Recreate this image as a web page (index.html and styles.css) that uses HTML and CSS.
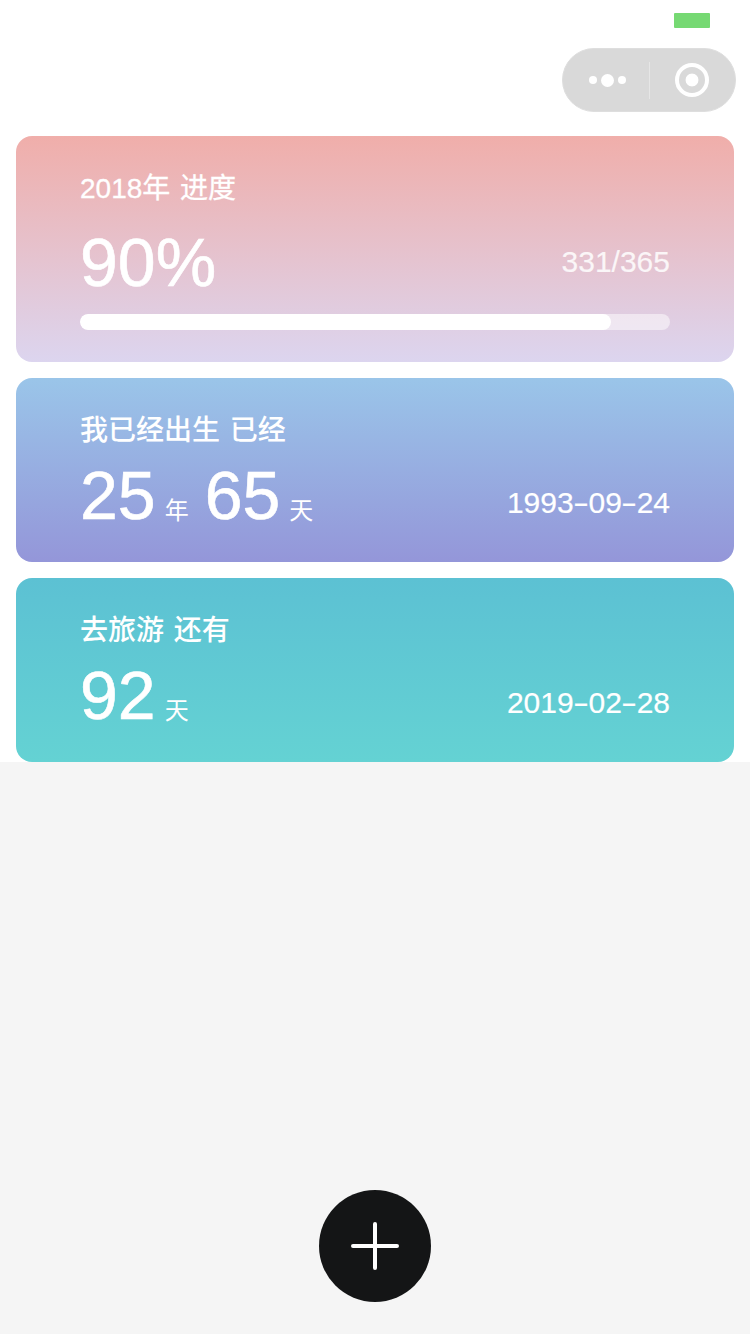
FILE: index.html
```html
<!DOCTYPE html>
<html lang="zh-CN">
<head>
    <meta charset="UTF-8">
    <meta name="viewport" content="width=device-width, initial-scale=1.0">
    <title>进度</title>
    <link rel="stylesheet" href="styles.css">
</head>
<body>
    <div class="top-area">
        <!-- Barre de statut -->
        <div class="status-bar">
            <div class="battery"></div>
        </div>

        <!-- Capsule -->
        <div class="nav-bar">
            <div class="capsule">
                <div class="capsule-dots">
                    <span class="dot"></span>
                    <span class="dot dot-big"></span>
                    <span class="dot"></span>
                </div>
                <div class="capsule-line"></div>
                <div class="capsule-close"></div>
            </div>
        </div>

        <!-- Cartes -->
        <div class="card-list">
            <div class="card card-pink">
                <p class="card-title">2018年 进度</p>
                <div class="card-row row-year">
                    <span class="big-num">90%</span>
                    <span class="card-side side-year">331/365</span>
                </div>
                <div class="progress">
                    <div class="progress-bar" style="width: 90%"></div>
                </div>
            </div>

            <div class="card card-blue">
                <p class="card-title">我已经出生 已经</p>
                <div class="card-row">
                    <div class="count">
                        <span class="big-num">25</span><span class="unit">年</span>
                        <span class="big-num num-next">65</span><span class="unit">天</span>
                    </div>
                    <span class="card-side">1993<span class="dash">-</span>09<span class="dash">-</span>24</span>
                </div>
            </div>

            <div class="card card-teal">
                <p class="card-title">去旅游 还有</p>
                <div class="card-row">
                    <div class="count">
                        <span class="big-num">92</span><span class="unit">天</span>
                    </div>
                    <span class="card-side">2019<span class="dash">-</span>02<span class="dash">-</span>28</span>
                </div>
            </div>
        </div>
    </div>

    <!-- Bouton ajouter -->
    <div class="bottom-area">
        <button class="add-btn" aria-label="添加">
            <svg width="48" height="48" viewBox="0 0 48 48">
                <path d="M24 2V46M2 24H46" stroke="#fff" stroke-width="4" stroke-linecap="round" fill="none"/>
            </svg>
        </button>
    </div>
</body>
</html>
```

FILE: styles.css
```css
/* General */
html, body {
    height: 100%;
}

body {
    margin: 0;
    display: flex;
    flex-direction: column;
    background-color: #f5f5f5;
    color: #fff;
    font-family: "Liberation Sans", "Noto Sans CJK SC", sans-serif;
}

.top-area {
    background-color: #fff;
}

/* Status bar */
.status-bar {
    height: 48px;
    box-sizing: border-box;
    padding: 13px 40px 0 0;
    display: flex;
    justify-content: flex-end;
}

.battery {
    width: 36px;
    height: 15px;
    background-color: #76d973;
    border-radius: 1px;
}

/* Capsule */
.nav-bar {
    height: 88px;
    display: flex;
    justify-content: flex-end;
    padding-right: 14px;
}

.capsule {
    width: 174px;
    height: 64px;
    box-sizing: border-box;
    border: 1px solid #dedede;
    border-radius: 32px;
    background-color: #d9d9d9;
    display: flex;
    align-items: center;
}

.capsule-dots {
    width: 86px;
    display: flex;
    justify-content: center;
    align-items: center;
    gap: 4px;
    padding-left: 2px;
    box-sizing: border-box;
}

.dot {
    width: 8px;
    height: 8px;
    border-radius: 50%;
    background-color: #fff;
}

.dot-big {
    width: 13px;
    height: 13px;
}

.capsule-line {
    width: 1px;
    height: 37px;
    background-color: #e6e6e6;
}

.capsule-close {
    width: 34px;
    height: 34px;
    margin-left: 25px;
    box-sizing: border-box;
    border: 4px solid #fff;
    border-radius: 50%;
    background: radial-gradient(circle, #fff 0, #fff 6px, transparent 6.8px);
}

/* Cards */
.card-list {
    display: flex;
    flex-direction: column;
    gap: 16px;
    padding: 0 16px;
}

.card {
    border-radius: 16px;
    padding: 0 64px;
    height: 184px;
    box-sizing: border-box;
}

.card-pink {
    height: 226px;
    background: linear-gradient(to bottom, #f0aeaa, #dcd5ef);
}

.card-blue {
    background: linear-gradient(to bottom, #9ac5e9, #9496d9);
}

.card-teal {
    background: linear-gradient(to bottom, #5cc1d3, #64d2d3);
}

.card-title {
    margin: 0;
    padding-top: 34px;
    font-size: 28px;
    line-height: 38px;
    word-spacing: 2px;
    -webkit-text-stroke: 0.3px #fff;
}

.card-blue .card-title,
.card-teal .card-title {
    font-weight: 500;
    -webkit-text-stroke: 0;
}

.card-row {
    display: flex;
    justify-content: space-between;
    align-items: center;
    height: 72px;
    margin-top: 17px;
}

.row-year {
    margin-top: 18px;
}

.count {
    display: flex;
    align-items: baseline;
    margin-bottom: 17px;
}

/* pas de medium en Liberation, on epaissit au stroke */
.big-num {
    font-size: 68px;
    line-height: 72px;
    -webkit-text-stroke: 0.6px #fff;
}

.num-next {
    margin-left: 16px;
}

.unit {
    margin-left: 9px;
    font-size: 24px;
}

.card-side {
    font-size: 30px;
    -webkit-text-stroke: 0.2px #fff;
}

.dash {
    display: inline-block;
    margin: 0 2.4px;
    transform: scaleX(1.6);
}

.side-year {
    opacity: 0.85;
}

/* Progress */
.progress {
    height: 16px;
    margin-top: 16px;
    border-radius: 8px;
    background-color: rgba(255, 255, 255, 0.5);
    overflow: hidden;
}

.progress-bar {
    height: 100%;
    border-radius: 8px;
    background-color: #fff;
}

/* Add button */
.bottom-area {
    flex: 1;
    display: flex;
    justify-content: center;
    align-items: flex-end;
    padding-bottom: 32px;
}

.add-btn {
    width: 112px;
    height: 112px;
    padding: 0;
    border: none;
    border-radius: 50%;
    background-color: #141516;
    display: flex;
    justify-content: center;
    align-items: center;
    cursor: pointer;
}
```
